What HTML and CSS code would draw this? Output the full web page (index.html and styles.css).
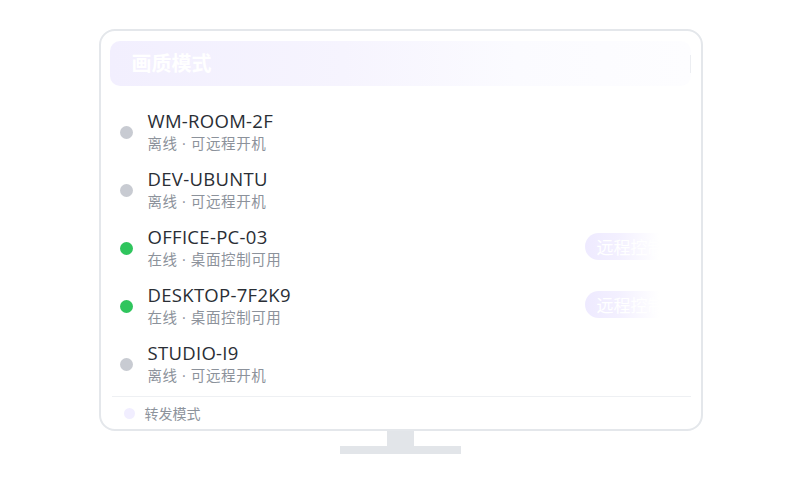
FILE: index.html
```html
<!DOCTYPE html>
<html lang="zh">
<head>
<meta charset="utf-8">
<link rel="stylesheet" href="styles.css">
</head>
<body>
<div class="stage">
  <div class="monitor">
    <div class="header">
      <span class="header-title">画质模式</span>
      <span class="header-edge"></span>
    </div>
    <div class="list">
      <div class="row">
        <span class="dot off"></span>
        <div class="info">
          <div class="name">WM-ROOM-2F</div>
          <div class="sub">离线 · 可远程开机</div>
        </div>
      </div>
      <div class="row">
        <span class="dot off"></span>
        <div class="info">
          <div class="name">DEV-UBUNTU</div>
          <div class="sub">离线 · 可远程开机</div>
        </div>
      </div>
      <div class="row">
        <span class="dot on"></span>
        <div class="info">
          <div class="name">OFFICE-PC-03</div>
          <div class="sub">在线 · 桌面控制可用</div>
        </div>
        <span class="btn">远程控制</span>
      </div>
      <div class="row">
        <span class="dot on"></span>
        <div class="info">
          <div class="name">DESKTOP-7F2K9</div>
          <div class="sub">在线 · 桌面控制可用</div>
        </div>
        <span class="btn">远程控制</span>
      </div>
      <div class="row">
        <span class="dot off"></span>
        <div class="info">
          <div class="name">STUDIO-I9</div>
          <div class="sub">离线 · 可远程开机</div>
        </div>
      </div>
    </div>
    <div class="footer">
      <span class="fdot"></span>
      <span class="ftext">转发模式</span>
    </div>
  </div>
  <div class="neck"></div>
  <div class="base"></div>
</div>
</body>
</html>
```
FILE: styles.css
```css
html, body {
  margin: 0;
  padding: 0;
  background: #ffffff;
}
body {
  font-family: "Noto Sans CJK SC", "Noto Sans", sans-serif;
  width: 800px;
  height: 500px;
  overflow: hidden;
}
.stage {
  padding-top: 29px;
  display: flex;
  flex-direction: column;
  align-items: center;
}
.monitor {
  box-sizing: border-box;
  width: 604px;
  height: 402px;
  margin-left: 1px;
  border: 2px solid #e4e7eb;
  border-radius: 16px;
  background: #ffffff;
  padding: 10px 10px 0 9px;
  display: flex;
  flex-direction: column;
}
.header {
  height: 45px;
  border-radius: 10px;
  background: linear-gradient(90deg, #f2effe 0%, #f6f4fe 40%, #fbfbff 70%, #fdfdff 100%);
  display: flex;
  align-items: center;
  padding-left: 22px;
  position: relative;
}
.header-title {
  color: #ffffff;
  font-size: 20px;
  font-weight: 700;
  line-height: 1;
  margin-top: -2px;
}
.header-edge {
  position: absolute;
  right: 0;
  top: 14px;
  width: 1px;
  height: 18px;
  background: #eceef2;
}
.list {
  margin-top: 18px;
  display: flex;
  flex-direction: column;
}
.row {
  height: 58px;
  box-sizing: border-box;
  padding: 5px 0 9px 10px;
  display: flex;
  align-items: flex-start;
}
.dot {
  width: 13px;
  height: 13px;
  border-radius: 50%;
  margin-top: 17px;
  flex: none;
}
.dot.off { background: #c8cbd2; }
.dot.on { background: #2fc55d; }
.info {
  margin-left: 15px;
  flex: 1;
}
.name {
  font-family: "Open Sans", "Noto Sans CJK SC", sans-serif;
  font-size: 18.5px;
  line-height: 24px;
  color: #2a2e35;
  letter-spacing: 0.3px;
}
.sub {
  font-family: "Open Sans", "Noto Sans CJK SC", sans-serif;
  font-size: 14.5px;
  letter-spacing: 0.6px;
  line-height: 20px;
  color: #8c929b;
  margin-top: 1px;
}
.btn {
  margin-top: 8px;
  margin-right: 22px;
  width: 84px;
  height: 27px;
  border-radius: 14px;
  background: linear-gradient(90deg, #eeeaff 0%, #f3f0ff 40%, #ffffff 88%);
  color: #ffffff;
  font-size: 17px;
  line-height: 27px;
  padding-left: 12px;
  box-sizing: border-box;
  white-space: nowrap;
  flex: none;
}
.footer {
  margin: 2px 0 0 2px;
  border-top: 1px solid #eef0f3;
  flex: 1;
  display: flex;
  align-items: center;
  padding-left: 12px;
}
.fdot {
  width: 11px;
  height: 11px;
  border-radius: 50%;
  background: #f1eeff;
  flex: none;
}
.ftext {
  margin-left: 10px;
  font-size: 14px;
  color: #8d939c;
  margin-top: -1px;
}
.neck {
  width: 27px;
  height: 15px;
  background: #e2e5e9;
  margin-left: 1px;
}
.base {
  width: 121px;
  height: 8px;
  background: #e2e5e9;
  margin-left: 1px;
}
```
